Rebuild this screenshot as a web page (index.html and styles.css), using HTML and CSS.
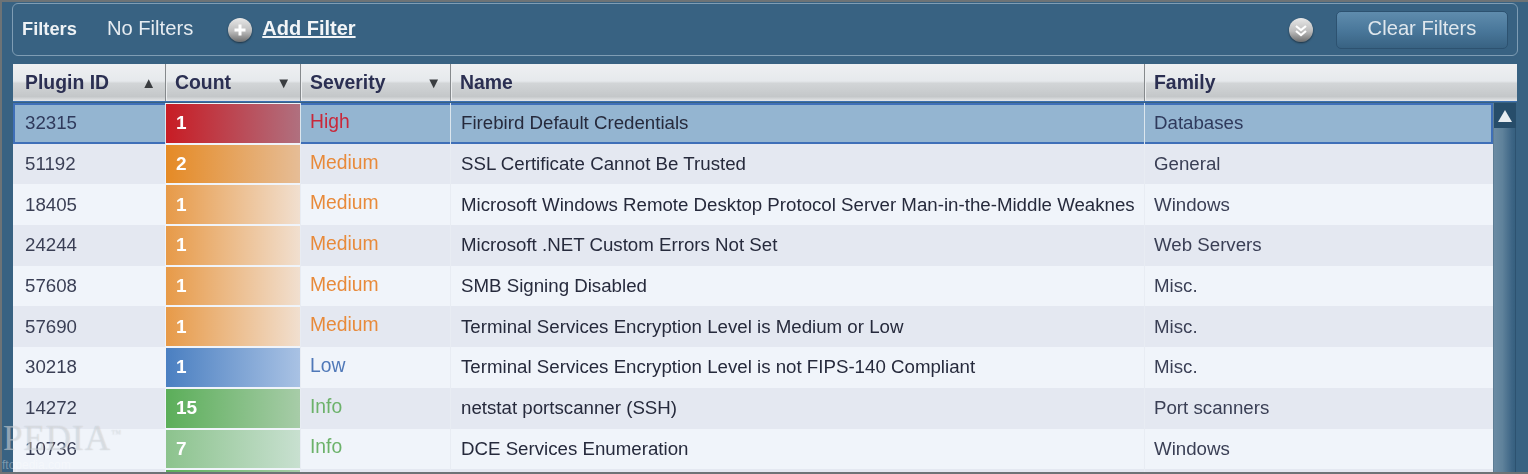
FILE: index.html
```html
<!DOCTYPE html>
<html lang="en">

<head>
    <meta charset="UTF-8">
    <title>Vulnerabilities</title>
    <link rel="stylesheet" href="styles.css">
</head>

<body>
    <div class="panel">
        <div class="filters">
            <span class="filters-label">Filters</span>
            <span class="filters-state">No Filters</span>
            <span class="round-btn add-btn">
                <svg viewBox="0 0 24 24" width="24" height="24">
                    <path d="M12 6.5v11M6.5 12h11" stroke="#fff" stroke-width="3" fill="none"/>
                </svg>
            </span>
            <a class="add-filter">Add Filter</a>
            <span class="round-btn expand-btn">
                <svg viewBox="0 0 24 24" width="24" height="24">
                    <path d="M7 8l5 4 5-4M7 13l5 4 5-4" stroke="#fff" stroke-width="2.2" fill="none"/>
                </svg>
            </span>
            <button class="clear-btn">Clear Filters</button>
        </div>

        <div class="grid">
            <div class="row head">
                <div class="cell">Plugin ID <span class="arrow">▲</span></div>
                <div class="cell">Count <span class="arrow">▼</span></div>
                <div class="cell">Severity <span class="arrow">▼</span></div>
                <div class="cell">Name</div>
                <div class="cell">Family</div>
            </div>
            <div class="body">
                <div class="rows">
                    <div class="row selected">
                        <div class="cell">32315</div>
                        <div class="cell count high-1">1</div>
                        <div class="cell sev-high">High</div>
                        <div class="cell name">Firebird Default Credentials</div>
                        <div class="cell">Databases</div>
                    </div>
                    <div class="row even">
                        <div class="cell">51192</div>
                        <div class="cell count med-2">2</div>
                        <div class="cell sev-med">Medium</div>
                        <div class="cell name">SSL Certificate Cannot Be Trusted</div>
                        <div class="cell">General</div>
                    </div>
                    <div class="row">
                        <div class="cell">18405</div>
                        <div class="cell count med-1">1</div>
                        <div class="cell sev-med">Medium</div>
                        <div class="cell name">Microsoft Windows Remote Desktop Protocol Server Man-in-the-Middle Weaknes</div>
                        <div class="cell">Windows</div>
                    </div>
                    <div class="row even">
                        <div class="cell">24244</div>
                        <div class="cell count med-1">1</div>
                        <div class="cell sev-med">Medium</div>
                        <div class="cell name">Microsoft .NET Custom Errors Not Set</div>
                        <div class="cell">Web Servers</div>
                    </div>
                    <div class="row">
                        <div class="cell">57608</div>
                        <div class="cell count med-1">1</div>
                        <div class="cell sev-med">Medium</div>
                        <div class="cell name">SMB Signing Disabled</div>
                        <div class="cell">Misc.</div>
                    </div>
                    <div class="row even">
                        <div class="cell">57690</div>
                        <div class="cell count med-1">1</div>
                        <div class="cell sev-med">Medium</div>
                        <div class="cell name">Terminal Services Encryption Level is Medium or Low</div>
                        <div class="cell">Misc.</div>
                    </div>
                    <div class="row">
                        <div class="cell">30218</div>
                        <div class="cell count low-1">1</div>
                        <div class="cell sev-low">Low</div>
                        <div class="cell name">Terminal Services Encryption Level is not FIPS-140 Compliant</div>
                        <div class="cell">Misc.</div>
                    </div>
                    <div class="row even">
                        <div class="cell">14272</div>
                        <div class="cell count info-1">15</div>
                        <div class="cell sev-info">Info</div>
                        <div class="cell name">netstat portscanner (SSH)</div>
                        <div class="cell">Port scanners</div>
                    </div>
                    <div class="row">
                        <div class="cell">10736</div>
                        <div class="cell count info-2">7</div>
                        <div class="cell sev-info">Info</div>
                        <div class="cell name">DCE Services Enumeration</div>
                        <div class="cell">Windows</div>
                    </div>
                    <div class="row even">
                        <div class="cell"></div>
                        <div class="cell count info-1"></div>
                        <div class="cell"></div>
                        <div class="cell"></div>
                        <div class="cell"></div>
                    </div>
                </div>
                <div class="scrollbar">
                    <div class="scroll-up"></div>
                    <div class="scroll-thumb"></div>
                </div>
            </div>
        </div>
    </div>
    <div class="watermark">PEDIA<sup>™</sup></div>
    <div class="watermark-url">ftopedia.com</div>
</body>

</html>
```

FILE: styles.css
```css
html,
body {
    height: 100%;
}

body {
    margin: 0;
    overflow: hidden;
    font-family: "Liberation Sans", Arial, sans-serif;
    background-color: #386282;
    position: relative;
}

.panel {
    height: 474px;
    box-sizing: border-box;
    padding: 1px 10px 0 10px;
    border-top: 2px solid #6d7376;
    border-left: 2px solid #6d7376;
    border-bottom: 2px solid #6d7376;
    filter: blur(0.6px);
    overflow: hidden;
}

.filters {
    height: 53px;
    box-sizing: border-box;
    display: flex;
    align-items: center;
    padding: 0 9px;
    border: 1px solid #7f9db4;
    border-radius: 6px;
    color: #fff;
}

.filters-label {
    font-size: 18.3px;
    font-weight: bold;
    color: #eef2f5;
    margin-right: 30px;
    padding-bottom: 2px;
}

.filters-state {
    font-size: 20.2px;
    color: #e6ecf1;
    margin-right: 35px;
    padding-bottom: 2px;
}

.round-btn {
    width: 24px;
    height: 24px;
    border-radius: 50%;
    background: linear-gradient(#e8e8e8, #bdbdbd 55%, #6e6e6e);
    box-shadow: 0 1px 2px rgba(0, 0, 0, 0.5);
    display: block;
}

.round-btn svg {
    display: block;
}

.add-filter {
    margin-left: 10px;
    font-size: 20px;
    font-weight: bold;
    color: #f2f5f7;
    text-decoration: underline;
    padding-bottom: 2px;
}

.expand-btn {
    margin-left: auto;
    margin-right: 23px;
}

.clear-btn {
    width: 172px;
    height: 38px;
    padding-bottom: 4px;
    font-family: inherit;
    font-size: 20.2px;
    color: #dfe7ed;
    border: 1px solid #2d5270;
    border-radius: 5px;
    background: linear-gradient(#5f8cad, #4a789b 50%, #386282);
}

.grid {
    margin-top: 8px;
    margin-left: 1px;
    margin-right: 1px;
}

.row {
    display: grid;
    grid-template-columns: 152px 135px 150px 694px 1fr;
    height: 40.7px;
    background: #f0f4fa;
    color: #3a3f55;
    font-size: 18.7px;
}

.row.even {
    background: #e4e8f1;
}

.cell {
    display: flex;
    align-items: center;
    box-sizing: border-box;
    padding-left: 10px;
    border-left: 1px solid #e8ecf3;
    white-space: nowrap;
    overflow: hidden;
}

.cell:first-child {
    padding-left: 12px;
    border-left: none;
}

.cell:last-child {
    padding-left: 9px;
}

.head {
    height: 37px;
    background: linear-gradient(#eef0f2, #e6e9ec 46%, #d2d5d7 52%, #c4c7c9 88%, #e4e6e8);
    color: #2b2f52;
    font-weight: bold;
    font-size: 19.4px;
    border-bottom: 1px solid #3b6fb0;
}

.head .cell {
    border-left: 1px solid #85898c;
    box-shadow: inset 1px 0 0 #eceef0;
    justify-content: space-between;
    padding-left: 9px;
    padding-right: 9px;
}

.head .cell:first-child {
    padding-left: 12px;
    border-left: none;
    box-shadow: none;
}

.arrow {
    font-size: 15px;
    color: #3a3d40;
}

.body {
    display: grid;
    grid-template-columns: 1480px 23px;
    margin-top: 1px;
}

.name {
    color: #262a3c;
}

.selected {
    background: #94b5d1;
    box-shadow: inset 0 0 0 2px #3f6fb8;
    color: #2f3a5c;
}

.selected .cell {
    border-left-color: #dce6ee;
}

.count {
    color: #fff;
    font-size: 19px;
    font-weight: bold;
    border: 1px solid #f0f4fa;
    border-width: 1px 0 1px 1px;
}

.high-1 {
    background: linear-gradient(90deg, #c81c24, #b0707f);
}

.med-2 {
    background: linear-gradient(90deg, #e58a25, #e6bd96);
}

.med-1 {
    background: linear-gradient(90deg, #e79a48, #f1dfcf);
}

.low-1 {
    background: linear-gradient(90deg, #4a7fc1, #a9c2e4);
}

.info-1 {
    background: linear-gradient(90deg, #5bae59, #a7cca8);
}

.info-2 {
    background: linear-gradient(90deg, #8cc38d, #c8e0d0);
}

.sev-high,
.sev-med,
.sev-low,
.sev-info {
    font-size: 19.3px;
    padding-left: 9px;
    padding-bottom: 3px;
}

.sev-high {
    color: #c9283a;
}

.sev-med {
    color: #e88a3a;
}

.sev-low {
    color: #4f78b8;
}

.sev-info {
    color: #6cb26a;
}

.scrollbar {
    background: linear-gradient(90deg, #37607f, #2c5472);
    height: 420px;
    border-left: 1px solid #5d7d94;
}

.scroll-up {
    height: 25px;
    background: #274d6a;
    position: relative;
}

.scroll-up::after {
    content: "";
    position: absolute;
    left: 4px;
    top: 7px;
    border-left: 7px solid transparent;
    border-right: 7px solid transparent;
    border-bottom: 12px solid #e8edf1;
}

.scroll-thumb {
    height: 395px;
    background: linear-gradient(90deg, #6b8ba3, #5f829b 40%, #3d6585 85%, #36607f);
    border-right: 1px solid #2d5270;
}

.watermark {
    position: absolute;
    left: 3px;
    top: 421px;
    font-family: "Liberation Serif", serif;
    font-size: 35px;
    letter-spacing: 1px;
    color: rgba(255, 255, 255, 0.4);
    text-shadow: 0 0 1px rgba(120, 130, 140, 0.4);
    line-height: 1;
}

.watermark sup {
    font-size: 10px;
}

.watermark-url {
    position: absolute;
    left: 2px;
    bottom: 2px;
    font-size: 12px;
    color: rgba(255, 255, 255, 0.35);
}
```
